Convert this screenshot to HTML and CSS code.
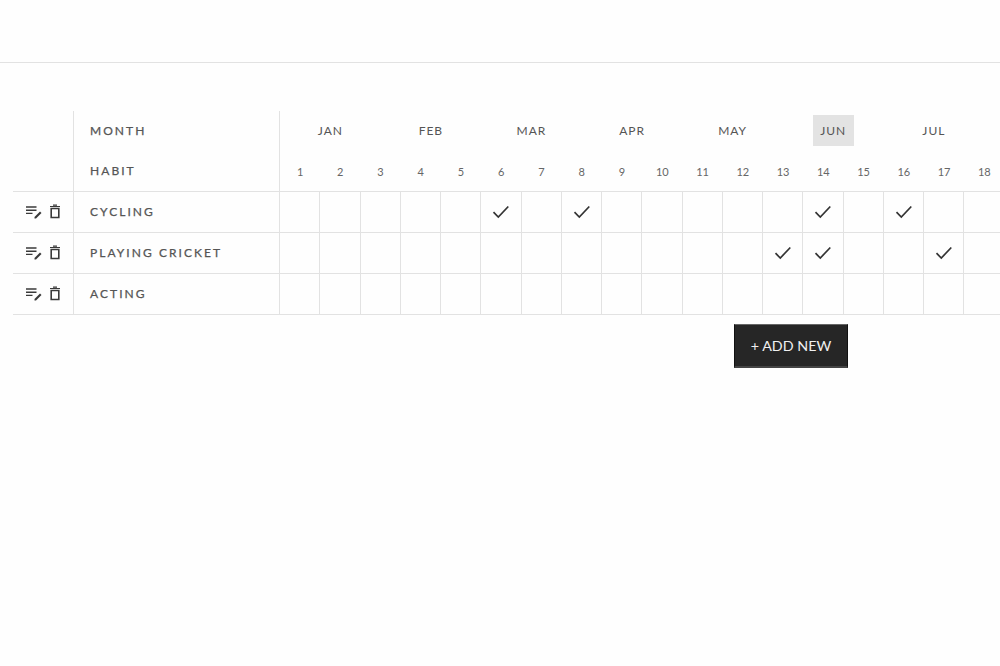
FILE: index.html
```html
<!DOCTYPE html>
<html lang="en">
<head>
<meta charset="utf-8">
<title>Habits</title>
<link rel="stylesheet" href="styles.css">
</head>
<body>
<svg class="defs" width="0" height="0" aria-hidden="true">
<symbol id="edit" viewBox="0 0 18 14"><path d="M1 2h10.500M1 5.200h10.500M1 8.400h6.500" fill="none" stroke="currentColor" stroke-width="1.400"/><path d="M9.500 13.500v-1.500l5.500-5.500 1.500 1.500-5.500 5.500z" fill="currentColor"/></symbol>
<symbol id="trash" viewBox="0 0 12 15"><path d="M2.200 4.500h7.600v9H2.200z" fill="none" stroke="currentColor" stroke-width="1.600"/><path d="M1 2.500h10M4 1.200h4" fill="none" stroke="currentColor" stroke-width="1.200"/></symbol>
<symbol id="check" viewBox="0 0 18 14"><path d="M1.500 7.200l4.800 4.800 10-10.500" fill="none" stroke="currentColor" stroke-width="1.700"/></symbol>
</svg>
<header class="topbar"></header>
<main class="main">
<div class="table">
<div class="row head">
<div class="actions"></div>
<div class="label">MONTH</div>
<div class="months">
<div class="month"><span>JAN</span></div><div class="month"><span>FEB</span></div><div class="month"><span>MAR</span></div><div class="month"><span>APR</span></div><div class="month"><span>MAY</span></div><div class="month"><span class="current">JUN</span></div><div class="month"><span>JUL</span></div>
</div>
</div>
<div class="row head days-row">
<div class="actions"></div>
<div class="label">HABIT</div>
<div class="days">
<div class="day">1</div><div class="day">2</div><div class="day">3</div><div class="day">4</div><div class="day">5</div><div class="day">6</div><div class="day">7</div><div class="day">8</div><div class="day">9</div><div class="day">10</div><div class="day">11</div><div class="day">12</div><div class="day">13</div><div class="day">14</div><div class="day">15</div><div class="day">16</div><div class="day">17</div><div class="day">18</div>
</div>
</div>
<div class="row habit">
<div class="actions"><svg class="ic-edit"><use href="#edit"/></svg><svg class="ic-trash"><use href="#trash"/></svg></div>
<div class="label">CYCLING</div>
<div class="cells">
<div class="cell"></div><div class="cell"></div><div class="cell"></div><div class="cell"></div><div class="cell"></div><div class="cell"><svg class="ic-check"><use href="#check"/></svg></div><div class="cell"></div><div class="cell"><svg class="ic-check"><use href="#check"/></svg></div><div class="cell"></div><div class="cell"></div><div class="cell"></div><div class="cell"></div><div class="cell"></div><div class="cell"><svg class="ic-check"><use href="#check"/></svg></div><div class="cell"></div><div class="cell"><svg class="ic-check"><use href="#check"/></svg></div><div class="cell"></div><div class="cell"></div>
</div>
</div>
<div class="row habit">
<div class="actions"><svg class="ic-edit"><use href="#edit"/></svg><svg class="ic-trash"><use href="#trash"/></svg></div>
<div class="label">PLAYING CRICKET</div>
<div class="cells">
<div class="cell"></div><div class="cell"></div><div class="cell"></div><div class="cell"></div><div class="cell"></div><div class="cell"></div><div class="cell"></div><div class="cell"></div><div class="cell"></div><div class="cell"></div><div class="cell"></div><div class="cell"></div><div class="cell"><svg class="ic-check"><use href="#check"/></svg></div><div class="cell"><svg class="ic-check"><use href="#check"/></svg></div><div class="cell"></div><div class="cell"></div><div class="cell"><svg class="ic-check"><use href="#check"/></svg></div><div class="cell"></div>
</div>
</div>
<div class="row habit">
<div class="actions"><svg class="ic-edit"><use href="#edit"/></svg><svg class="ic-trash"><use href="#trash"/></svg></div>
<div class="label">ACTING</div>
<div class="cells">
<div class="cell"></div><div class="cell"></div><div class="cell"></div><div class="cell"></div><div class="cell"></div><div class="cell"></div><div class="cell"></div><div class="cell"></div><div class="cell"></div><div class="cell"></div><div class="cell"></div><div class="cell"></div><div class="cell"></div><div class="cell"></div><div class="cell"></div><div class="cell"></div><div class="cell"></div><div class="cell"></div>
</div>
</div>
</div>
<div class="footer"><button class="add">+ ADD NEW</button></div>
</main>
</body>
</html>
```

FILE: styles.css
```css
* { box-sizing: border-box; }
html, body { margin: 0; height: 100%; overflow: hidden; }
body { background: #fefefe; color: #555; font-family: "Lato", "Noto Sans", sans-serif; }
.defs { position: absolute; }
.topbar { height: 63px; border-bottom: 1px solid #e2e2e2; }
.main { padding: 48px 0 0 13px; }
.table { width: 1000px; }
.row { display: flex; }
.head { height: 40px; }
.habit { height: 41px; border-top: 1px solid #e2e2e2; }
.habit:last-child { border-bottom: 1px solid #e2e2e2; height: 42px; }
.actions { width: 60px; flex: none; display: flex; align-items: center; gap: 6px; padding: 0 0 1px 12px; color: #3a3a3a; }
.label { width: 206.200px; flex: none; border-left: 1px solid #e2e2e2; padding: 0 0 2px 16px; display: flex; align-items: center; font-size: 12px; font-weight: 400; letter-spacing: 2.050px; color: #555; -webkit-text-stroke: .25px #555; }
.months { display: flex; align-items: center; border-left: 1px solid #e2e2e2; align-self: stretch; }
.month { width: 100.600px; flex: none; text-align: center; font-size: 12px; letter-spacing: 1px; color: #555; }
.month:first-child { width: 100.400px; }
.month span { display: inline-block; width: 41px; height: 31px; line-height: 31px; margin-bottom: 1px; }
.month .current { background: #e3e3e3; }
.days { display: flex; border-left: 1px solid #e2e2e2; }
.cells { display: flex; }
.day { width: 40.250px; flex: none; text-align: center; font-size: 11px; line-height: 41px; color: #666; }
.day:first-child { width: 40px; }
.cell { width: 40.250px; flex: none; border-left: 1px solid #e2e2e2; display: flex; align-items: center; justify-content: center; color: #333; }
.ic-edit { width: 18px; height: 14px; }
.ic-trash { width: 12px; height: 15px; }
.ic-check { width: 18px; height: 14px; }
.footer { padding: 9px 0 0 721px; }
.add { width: 114px; height: 44px; padding: 0; background: #262626; color: #f0f0f0; border: 1px solid #111; border-top: 1px solid #666; border-bottom: 2px solid #444; font-family: inherit; font-size: 14.300px; }
```
